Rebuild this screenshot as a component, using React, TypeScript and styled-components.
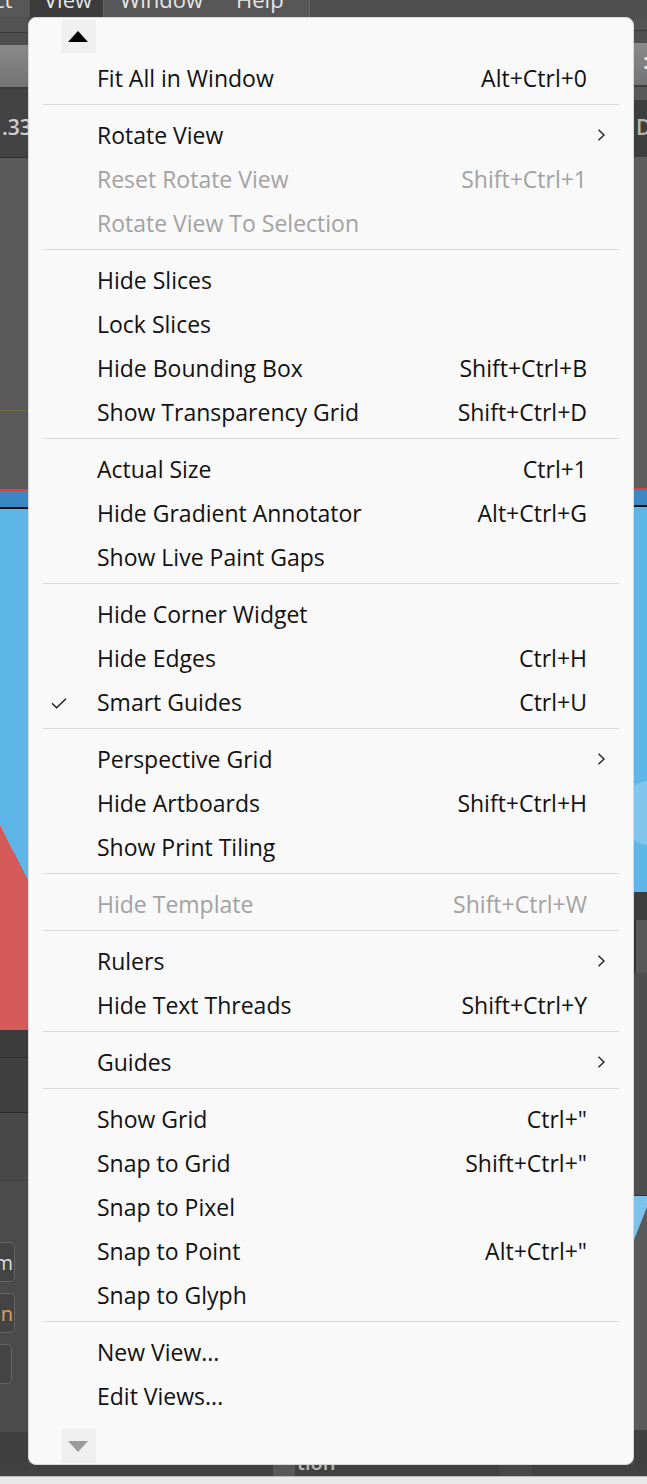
import styled, { createGlobalStyle } from 'styled-components'

const GlobalStyle = createGlobalStyle`
  html, body {
    margin: 0;
    padding: 0;
  }
  body {
    background: #4b4b4b;
    font-family: 'Open Sans', 'Noto Sans', sans-serif;
  }
`

type Item = {
  label: string
  shortcut?: string
  disabled?: boolean
  checked?: boolean
  submenu?: boolean
}

const groups: Item[][] = [
  [{ label: 'Fit All in Window', shortcut: 'Alt+Ctrl+0' }],
  [
    { label: 'Rotate View', submenu: true },
    { label: 'Reset Rotate View', shortcut: 'Shift+Ctrl+1', disabled: true },
    { label: 'Rotate View To Selection', disabled: true },
  ],
  [
    { label: 'Hide Slices' },
    { label: 'Lock Slices' },
    { label: 'Hide Bounding Box', shortcut: 'Shift+Ctrl+B' },
    { label: 'Show Transparency Grid', shortcut: 'Shift+Ctrl+D' },
  ],
  [
    { label: 'Actual Size', shortcut: 'Ctrl+1' },
    { label: 'Hide Gradient Annotator', shortcut: 'Alt+Ctrl+G' },
    { label: 'Show Live Paint Gaps' },
  ],
  [
    { label: 'Hide Corner Widget' },
    { label: 'Hide Edges', shortcut: 'Ctrl+H' },
    { label: 'Smart Guides', shortcut: 'Ctrl+U', checked: true },
  ],
  [
    { label: 'Perspective Grid', submenu: true },
    { label: 'Hide Artboards', shortcut: 'Shift+Ctrl+H' },
    { label: 'Show Print Tiling' },
  ],
  [{ label: 'Hide Template', shortcut: 'Shift+Ctrl+W', disabled: true }],
  [
    { label: 'Rulers', submenu: true },
    { label: 'Hide Text Threads', shortcut: 'Shift+Ctrl+Y' },
  ],
  [{ label: 'Guides', submenu: true }],
  [
    { label: 'Show Grid', shortcut: 'Ctrl+"' },
    { label: 'Snap to Grid', shortcut: 'Shift+Ctrl+"' },
    { label: 'Snap to Pixel' },
    { label: 'Snap to Point', shortcut: 'Alt+Ctrl+"' },
    { label: 'Snap to Glyph' },
  ],
  [{ label: 'New View...' }, { label: 'Edit Views...' }],
]

type BandDef = [number, string]

const leftBands: BandDef[] = [
  [15, '#525252'],
  [1, '#3a3a3a'],
  [12, '#4e4e4e'],
  [42, 'linear-gradient(#8a8a8a, #737373)'],
  [2, '#3a3a3a'],
]

const leftBands2: BandDef[] = [
  [1, '#2e2e2e'],
  [252, '#595959'],
  [1, '#6e6d3d'],
  [78, '#595959'],
  [2, '#d9443f'],
  [16, '#3a87c4'],
  [2, '#151515'],
  [316, '#5db6e7'],
  [55, 'linear-gradient(to bottom left, #5db6e7 50%, #d55a5a 50%)'],
  [150, '#d55a5a'],
  [27, '#3c3c3c'],
  [1, '#2f2f2f'],
  [54, '#404040'],
  [1, '#2b2b2b'],
  [67, '#484848'],
  [1, '#404040'],
]

const rightBandsTop: BandDef[] = [
  [13, '#545454'],
  [1, '#3a3a3a'],
  [12, '#4f4f4f'],
]

const rightBandsMid: BandDef[] = [
  [2, '#3e3e3e'],
  [13, '#585858'],
]

const rightBandsLow: BandDef[] = [
  [331, '#5d5d5d'],
  [2, '#d9443f'],
  [15, '#3a87c4'],
  [2, '#151515'],
  [
    385,
    'radial-gradient(circle at 18px 306px, rgba(255,255,255,0.22) 32px, transparent 33px), #5db6e7',
  ],
  [28, '#3e3e3e'],
]

export default function App() {
  return (
    <Page>
      <GlobalStyle />
      <TopBar>
        <TopItem $w={30} $pl={0}>
          <TopText style={{ marginLeft: -6 }}>ct</TopText>
        </TopItem>
        <TopItem $w={74} $pl={14} $active>
          <TopText>View</TopText>
        </TopItem>
        <TopItem $w={118} $pl={16}>
          <TopText>Window</TopText>
        </TopItem>
        <TopItem $w={88} $pl={14} $last>
          <TopText>Help</TopText>
        </TopItem>
        <TopFill />
      </TopBar>

      <Middle>
        <Strip $w={28}>
          {leftBands.map(([h, bg], i) => (
            <Band key={i} $h={h} $bg={bg} />
          ))}
          <Band $h={68} $bg="#434343">
            <StripText $top={28} $left={2} $color="#cfcfcf">.33</StripText>
          </Band>
          {leftBands2.map(([h, bg], i) => (
            <Band key={i} $h={h} $bg={bg} />
          ))}
          <Band $h={251} $bg="#4b4b4b">
            <FieldStack>
              <Field $w={25}>
                <FieldText>m</FieldText>
              </Field>
              <Field $w={25}>
                <FieldText $orange>n</FieldText>
              </Field>
              <Field $w={22} />
            </FieldStack>
          </Band>
          <Band $h={33} $bg="#404040" />
        </Strip>

        <Canvas />

        <Strip $w={13}>
          {rightBandsTop.map(([h, bg], i) => (
            <Band key={i} $h={h} $bg={bg} />
          ))}
          <Band $h={42} $bg="linear-gradient(#8a8a8a, #737373)">
            <StripText $top={8} $left={9} $color="#e8e8e8">:</StripText>
          </Band>
          {rightBandsMid.map(([h, bg], i) => (
            <Band key={i} $h={h} $bg={bg} />
          ))}
          <Band $h={57} $bg="#3e3e3e">
            <StripText $top={17} $left={2} $color="#b4b4b4">D</StripText>
          </Band>
          {rightBandsLow.map(([h, bg], i) => (
            <Band key={i} $h={h} $bg={bg} />
          ))}
          <Band $h={53} $bg="#585858" $edge />
          <Band $h={222} $bg="#4e4e4e" />
          <Band $h={1} $bg="#333333" />
          <Band $h={44} $bg="#5a5a5a">
            <Wedge />
          </Band>
          <Band $h={190} $bg="#5a5a5a" />
          <Band $h={35} $bg="#404040" />
        </Strip>

        <Menu>
          <ScrollButton>
            <TriangleUp />
          </ScrollButton>

          {groups.map((group, gi) => (
            <Group key={gi}>
              {gi > 0 && (
                <Separator>
                  <Line />
                </Separator>
              )}
              {group.map((item) => (
                <Row key={item.label} $disabled={item.disabled}>
                  <CheckCell>
                    {item.checked && (
                      <svg width="16" height="11" viewBox="0 0 16 11">
                        <path
                          d="M1 5.2 L5.6 9.8 L15 0.8"
                          fill="none"
                          stroke="#1a1a1a"
                          strokeWidth="1.4"
                        />
                      </svg>
                    )}
                  </CheckCell>
                  <Label>{item.label}</Label>
                  {item.shortcut && <Shortcut>{item.shortcut}</Shortcut>}
                  <ArrowCell>
                    {item.submenu && (
                      <svg width="9" height="12" viewBox="0 0 9 12">
                        <path
                          d="M1.5 0.8 L7 6 L1.5 11.2"
                          fill="none"
                          stroke="#222"
                          strokeWidth="1.4"
                        />
                      </svg>
                    )}
                  </ArrowCell>
                </Row>
              ))}
            </Group>
          ))}

          <ScrollButton $bottom>
            <TriangleDown />
          </ScrollButton>
        </Menu>
      </Middle>

      <Footer>
        <FooterBlock $w={22} $bg="#585858" style={{ marginLeft: 273 }} />
        <FooterText>tion</FooterText>
        <FooterBlock $w={33} $bg="#474747" style={{ marginLeft: 164 }} />
      </Footer>
      <LightStrip />
    </Page>
  )
}

const Page = styled.div`
  position: relative;
  width: 647px;
  height: 1484px;
  overflow: hidden;
  background: #4b4b4b;
  display: flex;
  flex-direction: column;
`

const TopBar = styled.div`
  display: flex;
  height: 17px;
  flex-shrink: 0;
  background: #575757;
  overflow: hidden;
`

const TopItem = styled.div<{ $w: number; $pl: number; $active?: boolean; $last?: boolean }>`
  width: ${(p) => p.$w}px;
  padding-left: ${(p) => p.$pl}px;
  box-sizing: border-box;
  height: 17px;
  overflow: hidden;
  background: ${(p) => (p.$active ? '#3c3c3c' : 'transparent')};
  border-right: ${(p) => (p.$active || p.$last ? '1px solid #666' : 'none')};
  flex-shrink: 0;
`

const TopText = styled.div`
  margin-top: -18px;
  line-height: 34px;
  font-size: 22px;
  color: #e6e6e6;
  white-space: nowrap;
`

const TopFill = styled.div`
  flex: 1;
  background: #4f4f4f;
`

const Middle = styled.div`
  position: relative;
  display: flex;
  height: 1448px;
  flex-shrink: 0;
`

const Strip = styled.div<{ $w: number }>`
  width: ${(p) => p.$w}px;
  flex-shrink: 0;
  display: flex;
  flex-direction: column;
  overflow: hidden;
`

const Band = styled.div<{ $h: number; $bg: string; $edge?: boolean }>`
  position: relative;
  height: ${(p) => p.$h}px;
  flex-shrink: 0;
  background: ${(p) => p.$bg};
  border-left: ${(p) => (p.$edge ? '2px solid #333' : 'none')};
  overflow: hidden;
`

const StripText = styled.div<{ $top: number; $left: number; $color: string }>`
  padding-top: ${(p) => p.$top}px;
  padding-left: ${(p) => p.$left}px;
  font-size: 21px;
  line-height: 21px;
  font-weight: 600;
  color: ${(p) => p.$color};
  white-space: nowrap;
`

const FieldStack = styled.div`
  display: flex;
  flex-direction: column;
  gap: 11px;
  padding-top: 61px;
`

const Field = styled.div<{ $w: number }>`
  width: ${(p) => p.$w}px;
  height: 40px;
  margin-left: -10px;
  box-sizing: border-box;
  border: 1px solid #666;
  border-radius: 5px;
  background: #444;
  display: flex;
  align-items: center;
  justify-content: flex-end;
  padding-right: 1px;
`

const FieldText = styled.span<{ $orange?: boolean }>`
  font-size: 20px;
  color: ${(p) => (p.$orange ? '#e3a25a' : '#dedede')};
`

const Wedge = styled.div`
  width: 13px;
  height: 44px;
  background: #7cc2ea;
  clip-path: polygon(0 0, 100% 0, 100% 25%, 0 100%);
`

const Canvas = styled.div`
  flex: 1;
  background: #4b4b4b;
`

const Menu = styled.div`
  position: absolute;
  top: 0;
  left: 28px;
  width: 606px;
  height: 1448px;
  box-sizing: border-box;
  padding: 2px 0 1px;
  background: #f9f9f9;
  border: 1px solid #d8d8d8;
  border-radius: 8px;
  display: flex;
  flex-direction: column;
  font-family: 'Open Sans', 'Noto Sans', sans-serif;
`

const ScrollButton = styled.div<{ $bottom?: boolean }>`
  width: 34px;
  height: ${(p) => (p.$bottom ? 34 : 33)}px;
  margin-left: 33px;
  margin-top: ${(p) => (p.$bottom ? 11 : 0)}px;
  margin-bottom: ${(p) => (p.$bottom ? 0 : 3)}px;
  background: #efefef;
  display: flex;
  align-items: center;
  justify-content: center;
  flex-shrink: 0;
`

const TriangleUp = styled.div`
  width: 0;
  height: 0;
  margin-left: -3px;
  border-left: 10.5px solid transparent;
  border-right: 10.5px solid transparent;
  border-bottom: 11px solid #000;
`

const TriangleDown = styled.div`
  width: 0;
  height: 0;
  margin-left: -3px;
  border-left: 10.5px solid transparent;
  border-right: 10.5px solid transparent;
  border-top: 11px solid #9b9b9b;
`

const Group = styled.div`
  display: flex;
  flex-direction: column;
`

const Separator = styled.div`
  height: 13px;
  box-sizing: border-box;
  padding: 4px 14px 8px;
`

const Line = styled.div`
  height: 1px;
  background: #d9d9d9;
`

const Row = styled.div<{ $disabled?: boolean }>`
  display: flex;
  align-items: center;
  height: 44px;
  font-size: 23px;
  line-height: 44px;
  color: ${(p) => (p.$disabled ? '#a2a2a2' : '#111')};
  white-space: nowrap;
`

const CheckCell = styled.div`
  width: 68px;
  flex-shrink: 0;
  display: flex;
  align-items: center;
  padding-left: 22px;
  padding-top: 2px;
  box-sizing: border-box;
`

const Label = styled.span`
  flex: 1;
`

const Shortcut = styled.span``

const ArrowCell = styled.div`
  width: 46px;
  flex-shrink: 0;
  display: flex;
  align-items: center;
  padding-left: 10px;
  box-sizing: border-box;
`

const Footer = styled.div`
  display: flex;
  height: 11px;
  flex-shrink: 0;
  background: #414141;
  overflow: hidden;
`

const FooterBlock = styled.div<{ $w: number; $bg: string }>`
  width: ${(p) => p.$w}px;
  flex-shrink: 0;
  background: ${(p) => p.$bg};
`

const FooterText = styled.div`
  margin-left: 2px;
  margin-top: -14px;
  font-size: 20px;
  line-height: 24px;
  font-weight: 600;
  color: #b9b9b9;
`

const LightStrip = styled.div`
  height: 8px;
  flex-shrink: 0;
  background: #e9e9e9;
  border-top: 1px solid #bdbdbd;
  box-sizing: border-box;
`
